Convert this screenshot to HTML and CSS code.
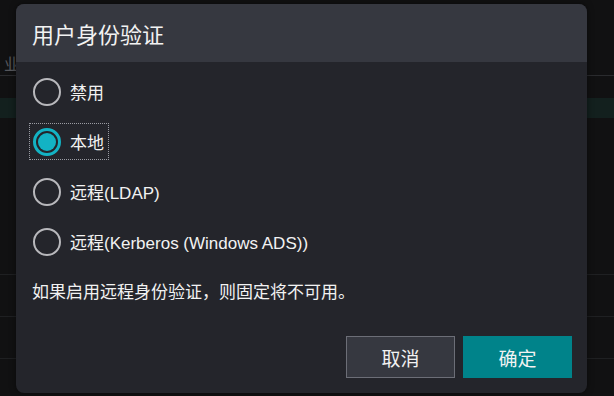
FILE: index.html
```html
<!DOCTYPE html>
<html>
  <head>
    <link rel="stylesheet" href="styles.css">
  </head>
  <body>
    <div class="backdrop">
      <div class="bg-row bg-head"><span class="bg-text">业</span></div>
      <div class="bg-row bg-active"></div>
      <div class="bg-row bg-tall"></div>
      <div class="bg-row"></div>
      <div class="bg-row"></div>
    </div>

    <div class="dialog">
      <div class="dialog-header">
        <span class="dialog-title">用户身份验证</span>
      </div>
      <div class="dialog-body">
        <div class="options">
          <label class="option">
            <span class="radio"></span>
            <span class="option-text">禁用</span>
          </label>
          <label class="option focused">
            <span class="radio checked"><span class="dot"></span></span>
            <span class="option-text">本地</span>
          </label>
          <label class="option">
            <span class="radio"></span>
            <span class="option-text">远程(LDAP)</span>
          </label>
          <label class="option">
            <span class="radio"></span>
            <span class="option-text">远程(Kerberos (Windows ADS))</span>
          </label>
        </div>
        <p class="note">如果启用远程身份验证，则固定将不可用。</p>
      </div>
      <div class="dialog-footer">
        <button class="btn btn-cancel">取消</button>
        <button class="btn btn-ok">确定</button>
      </div>
    </div>
  </body>
</html>
```

FILE: styles.css
```css
html,
body {
  margin: 0;
  height: 100%;
  background-color: #111112;
  font-family: "Liberation Sans", "Noto Sans CJK SC", sans-serif;
  overflow: hidden;
}
.backdrop {
  display: flex;
  flex-direction: column;
  padding-top: 50px;
}
.bg-row {
  height: 42px;
  border-bottom: 1px solid #1f2022;
  box-sizing: border-box;
}
.bg-head {
  height: 26px;
  display: flex;
  align-items: center;
  border-bottom: 1px solid #2a2b2e;
  margin-bottom: 22px;
}
.bg-text {
  margin-left: 4px;
  font-size: 16px;
  color: #55575c;
}
.bg-active {
  height: 20px;
  background-color: #13201e;
  border-bottom: none;
}
.bg-tall {
  height: 157px;
}
.dialog {
  position: absolute;
  left: 16px;
  top: 4px;
  width: 571px;
  height: 389px;
  display: flex;
  flex-direction: column;
  border-radius: 8px;
  overflow: hidden;
  background-color: #24252b;
  color: #f2f2f2;
  box-shadow: 0 0 6px rgba(0, 0, 0, 0.5);
}
.dialog-header {
  height: 58px;
  display: flex;
  align-items: center;
  padding: 0 16px;
  background-color: #363840;
  flex-shrink: 0;
}
.dialog-title {
  font-size: 22px;
}
.dialog-body {
  flex: 1;
  display: flex;
  flex-direction: column;
  padding: 12px 14px 0;
}
.options {
  display: flex;
  flex-direction: column;
  align-items: flex-start;
  gap: 15px;
}
.option {
  display: inline-flex;
  align-items: center;
  gap: 9px;
  padding: 3px 4px 3px 3px;
  height: 37px;
  box-sizing: border-box;
  border: 1px dotted transparent;
  margin: -1px;
}
.option.focused {
  border-color: #9a9ca3;
}
.option-text {
  font-size: 17px;
}
.radio {
  width: 28px;
  height: 28px;
  box-sizing: border-box;
  border-radius: 50%;
  border: 2px solid #b8b8bc;
  display: flex;
  align-items: center;
  justify-content: center;
}
.radio.checked {
  border: 3px solid #13b3c4;
}
.dot {
  width: 18px;
  height: 18px;
  border-radius: 50%;
  background-color: #13b3c4;
}
.note {
  margin: 22px 2px 0;
  font-size: 17px;
  line-height: 24px;
}
.dialog-footer {
  display: flex;
  justify-content: flex-end;
  gap: 8px;
  padding: 0 15px 15px;
}
.btn {
  width: 109px;
  height: 42px;
  font-family: inherit;
  font-size: 19px;
  color: #f2f2f2;
  border: 1px solid transparent;
  border-radius: 0;
}
.btn-cancel {
  background-color: #363840;
  border-color: #6c6e77;
}
.btn-ok {
  background-color: #00838a;
}
```
